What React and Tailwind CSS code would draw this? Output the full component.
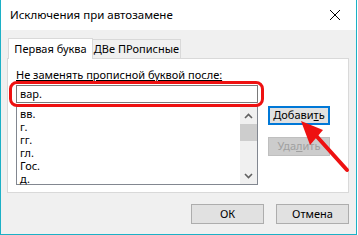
import React from 'react'

const items = ['вв.', 'г.', 'гг.', 'гл.', 'Гос.', 'д.']

function Btn({ children, className = '', disabled = false, focused = false }) {
  return (
    <div
      className={`flex items-center justify-center ${
        focused ? 'border-2 border-[#0078d7]' : 'border border-[#adadad]'
      } ${disabled ? 'bg-[#cccccc] text-[#a0a0a0] border-[#bfbfbf]' : 'bg-[#e1e1e1] text-black'} ${className}`}
    >
      {children}
    </div>
  )
}

export default function App() {
  return (
    <div
      className="relative w-[357px] h-[235px] flex flex-col bg-[#f0f0f0] border-x border-b border-[#1cb0c6] text-[11px] text-black overflow-hidden"
      style={{ fontFamily: '"Noto Sans", "Open Sans", sans-serif' }}
    >
      {/* title bar */}
      <div className="h-[30px] bg-white flex items-center justify-between pl-[9px] pr-[15px] shrink-0">
        <span className="text-[11.5px] leading-none">Исключения при автозамене</span>
        <svg width="12" height="12" viewBox="0 0 12 12">
          <path d="M1 1 L11 11 M11 1 L1 11" stroke="#000" strokeWidth="1" />
        </svg>
      </div>

      <div className="flex-1 flex flex-col pl-[6px] pr-[7px] pt-[7px]">
        {/* tabs */}
        <div className="flex items-end h-[21px] pl-px">
          <div className="h-[21px] w-[85px] bg-white border-t border-x border-[#d9d9d9] flex items-center justify-center relative z-10 -mb-px">
            Первая буква
          </div>
          <div className="h-[19px] w-[88px] bg-[#f0f0f0] border-t border-r border-[#d9d9d9] flex items-center justify-center">
            ДВе ПРописные
          </div>
        </div>

        {/* tab panel */}
        <div className="h-[135px] bg-white border border-[#d9d9d9] flex pl-[8px] pt-[9px] gap-[10px]">
          <div className="flex flex-col w-[242px]">
            <div className="underline leading-[14px] h-[17px]">Не заменять прописной буквой после:</div>
            <div className="h-[18px] border border-[#7a7a7a] flex items-center px-[3px]">вар.</div>
            <div className="h-[79px] mt-[3px] border border-[#828790] flex">
              <div className="flex-1 flex flex-col pl-[3px]">
                {items.map((t) => (
                  <div key={t} className="h-[13px] leading-[13px]">{t}</div>
                ))}
              </div>
              <div className="w-[17px] bg-[#f0f0f0] flex flex-col items-center">
                <div className="h-[17px] flex items-center justify-center">
                  <svg width="9" height="6" viewBox="0 0 9 6">
                    <path d="M1 5 L4.5 1.5 L8 5" stroke="#606060" strokeWidth="1.6" fill="none" />
                  </svg>
                </div>
                <div className="w-[17px] h-[17px] bg-[#cdcdcd]" />
                <div className="flex-1" />
                <div className="h-[17px] flex items-center justify-center">
                  <svg width="9" height="6" viewBox="0 0 9 6">
                    <path d="M1 1 L4.5 4.5 L8 1" stroke="#606060" strokeWidth="1.6" fill="none" />
                  </svg>
                </div>
              </div>
            </div>
          </div>
          <div className="flex flex-col pt-[38px] gap-[12px]">
            <Btn focused className="w-[62px] h-[19px]">
              <span>
                Добави<span className="underline">т</span>ь
              </span>
            </Btn>
            <Btn disabled className="w-[62px] h-[19px]">
              <span>
                Уда<span className="underline">л</span>ить
              </span>
            </Btn>
          </div>
        </div>

        {/* bottom buttons */}
        <div className="flex justify-end gap-[12px] mt-[11px]">
          <Btn className="w-[73px] h-[20px]">ОК</Btn>
          <Btn className="w-[73px] h-[20px]">Отмена</Btn>
        </div>
      </div>

      {/* annotation: red highlight */}
      <div className="absolute left-[8px] top-[81px] w-[255px] h-[26px] border-[3px] border-[#ee1111] rounded-[8px] pointer-events-none" />

      {/* annotation: red arrow */}
      <svg className="absolute left-0 top-0 pointer-events-none" width="357" height="235">
        <line x1="346" y1="170" x2="310" y2="130" stroke="#ee1111" strokeWidth="4" strokeLinecap="round" />
        <polygon points="300,121 322,130 309,145" fill="#ee1111" />
      </svg>
    </div>
  )
}
